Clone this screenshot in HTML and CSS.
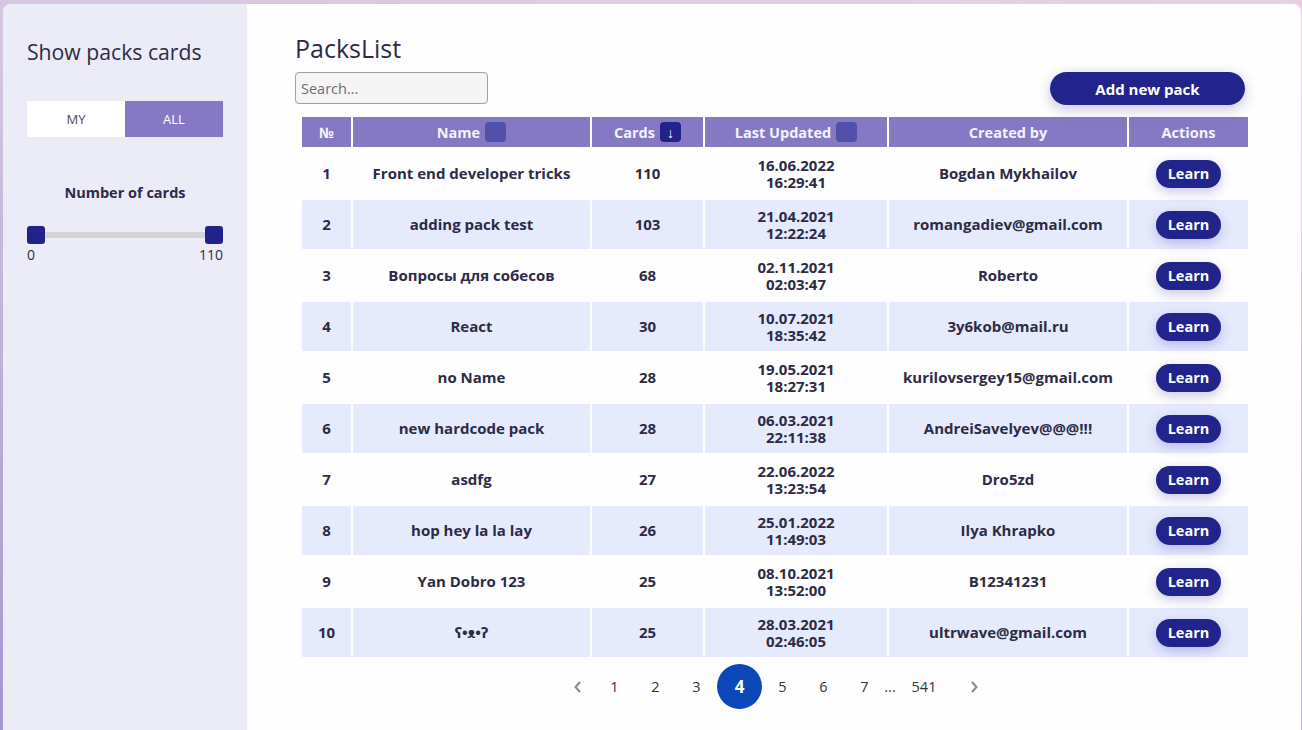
FILE: index.html
```html
<!DOCTYPE html>
<html lang="en">
<head>
<meta charset="utf-8">
<title>PacksList</title>
<link rel="stylesheet" href="styles.css">
</head>
<body>
<div class="app">
  <aside class="sidebar">
    <h2 class="side-title">Show packs cards</h2>
    <div class="toggle">
      <button class="toggle-btn">MY</button>
      <button class="toggle-btn active">ALL</button>
    </div>
    <div class="range">
      <div class="range-title">Number of cards</div>
      <div class="slider">
        <span class="thumb"></span>
        <span class="thumb"></span>
      </div>
      <div class="range-labels"><span>0</span><span>110</span></div>
    </div>
  </aside>
  <main class="main">
    <h1 class="title">PacksList</h1>
    <div class="toolbar">
      <input class="search" type="text" placeholder="Search...">
      <button class="add-btn">Add new pack</button>
    </div>
    <table class="packs">
      <colgroup>
        <col class="c-num"><col class="c-name"><col class="c-cards"><col class="c-date"><col class="c-user"><col class="c-act">
      </colgroup>
      <thead>
        <tr>
          <th>№</th>
          <th><span class="th-in">Name <span class="sort"></span></span></th>
          <th><span class="th-in">Cards <span class="sort on">↓</span></span></th>
          <th><span class="th-in">Last Updated <span class="sort"></span></span></th>
          <th>Created by</th>
          <th>Actions</th>
        </tr>
      </thead>
      <tbody>
        <tr><td>1</td><td>Front end developer tricks</td><td>110</td><td>16.06.2022<br>16:29:41</td><td>Bogdan Mykhailov</td><td><button class="learn">Learn</button></td></tr>
        <tr><td>2</td><td>adding pack test</td><td>103</td><td>21.04.2021<br>12:22:24</td><td>romangadiev@gmail.com</td><td><button class="learn">Learn</button></td></tr>
        <tr><td>3</td><td>Вопросы для собесов</td><td>68</td><td>02.11.2021<br>02:03:47</td><td>Roberto</td><td><button class="learn">Learn</button></td></tr>
        <tr><td>4</td><td>React</td><td>30</td><td>10.07.2021<br>18:35:42</td><td>3y6kob@mail.ru</td><td><button class="learn">Learn</button></td></tr>
        <tr><td>5</td><td>no Name</td><td>28</td><td>19.05.2021<br>18:27:31</td><td>kurilovsergey15@gmail.com</td><td><button class="learn">Learn</button></td></tr>
        <tr><td>6</td><td>new hardcode pack</td><td>28</td><td>06.03.2021<br>22:11:38</td><td>AndreiSavelyev@@@!!!</td><td><button class="learn">Learn</button></td></tr>
        <tr><td>7</td><td>asdfg</td><td>27</td><td>22.06.2022<br>13:23:54</td><td>Dro5zd</td><td><button class="learn">Learn</button></td></tr>
        <tr><td>8</td><td>hop hey la la lay</td><td>26</td><td>25.01.2022<br>11:49:03</td><td>Ilya Khrapko</td><td><button class="learn">Learn</button></td></tr>
        <tr><td>9</td><td>Yan Dobro 123</td><td>25</td><td>08.10.2021<br>13:52:00</td><td>B12341231</td><td><button class="learn">Learn</button></td></tr>
        <tr><td>10</td><td>ʕ•ᴥ•ʔ</td><td>25</td><td>28.03.2021<br>02:46:05</td><td>ultrwave@gmail.com</td><td><button class="learn">Learn</button></td></tr>
      </tbody>
    </table>
    <nav class="pager">
      <span class="pg arrow"><svg width="10" height="14" viewBox="0 0 10 14"><polyline points="7,2 2.5,7 7,12" fill="none" stroke="#8a8a8a" stroke-width="2"/></svg></span>
      <span class="pg">1</span>
      <span class="pg">2</span>
      <span class="pg">3</span>
      <span class="pg current">4</span>
      <span class="pg">5</span>
      <span class="pg">6</span>
      <span class="pg">7</span>
      <span class="pg dots">...</span>
      <span class="pg last">541</span>
      <span class="pg arrow next"><svg width="10" height="14" viewBox="0 0 10 14"><polyline points="3,2 7.5,7 3,12" fill="none" stroke="#8a8a8a" stroke-width="2"/></svg></span>
    </nav>
  </main>
</div>
</body>
</html>
```

FILE: styles.css
```css
* { box-sizing: border-box; }
html, body { height: 100%; }
body {
  margin: 0;
  padding: 4px 1px 0 3px;
  background: linear-gradient(200deg, #e6d2e0 0%, #d3c4e0 45%, #a597cf 100%);
  font-family: "Open Sans", "Noto Sans", sans-serif;
  color: #2d2b46;
  overflow: hidden;
}
.app {
  display: flex;
  height: calc(100vh - 4px);
  background: #fefefe;
  border-radius: 8px 8px 0 0;
  overflow: hidden;
}
.sidebar {
  width: 244px;
  flex: none;
  background: #ecebf8;
  padding: 34px 24px 0 24px;
}
.side-title {
  margin: 0;
  font-size: 21.2px;
  font-weight: 400;
  line-height: 28px;
  color: #2d2b46;
}
.toggle {
  display: flex;
  margin-top: 35px;
  height: 36px;
}
.toggle-btn {
  flex: 1;
  border: 0;
  margin: 0;
  padding: 0;
  font-family: inherit;
  font-size: 13px;
  color: #4a4960;
  background: #ffffff;
}
.toggle-btn.active {
  background: #8679c3;
  color: #ffffff;
}
.range { margin-top: 46px; }
.range-title {
  text-align: center;
  font-weight: 700;
  font-size: 14.5px;
  line-height: 20px;
  color: #2d2b46;
}
.slider {
  position: relative;
  margin-top: 23px;
  height: 18px;
  display: flex;
  justify-content: space-between;
  align-items: center;
}
.slider::before {
  content: "";
  position: absolute;
  left: 0; right: 0;
  top: 6px;
  height: 6px;
  background: #d4d4d6;
}
.thumb {
  position: relative;
  width: 18px;
  height: 18px;
  border-radius: 3px;
  background: #22238a;
}
.range-labels {
  display: flex;
  justify-content: space-between;
  font-size: 14px;
  line-height: 20px;
  color: #2d2b46;
  margin-top: 1px;
}
.main {
  flex: 1;
  padding: 28px 0 0 48px;
}
.title {
  margin: 0;
  font-size: 25px;
  font-weight: 400;
  line-height: 32px;
  color: #2d2b46;
}
.toolbar {
  width: 950px;
  display: flex;
  justify-content: space-between;
  align-items: flex-start;
  margin-top: 8px;
}
.search {
  width: 193px;
  height: 32px;
  border: 1px solid #a0a0a0;
  border-radius: 4px;
  background: #f5f5f5;
  padding: 0 5px;
  font-family: inherit;
  font-size: 14.5px;
  color: #333;
}
.search::placeholder { color: #6e6e78; }
.add-btn {
  width: 195px;
  height: 33px;
  border: 0;
  border-radius: 17px;
  background: #21248b;
  color: #ffffff;
  font-family: inherit;
  font-weight: 700;
  font-size: 15px;
  box-shadow: 0 4px 14px rgba(40, 40, 160, 0.28);
}
.packs {
  margin: 10px 0 0 5px;
  width: 950px;
  table-layout: fixed;
  border-collapse: separate;
  border-spacing: 2px;
}
.c-num { width: 49px; }
.c-name { width: 237px; }
.c-cards { width: 111px; }
.c-date { width: 182px; }
.c-user { width: 238px; }
.c-act { width: 119px; }
.packs th {
  height: 30px;
  padding: 0;
  background: #8679c3;
  color: #f3f2ff;
  font-size: 14.5px;
  font-weight: 700;
  text-align: center;
}
.th-in {
  display: inline-flex;
  align-items: center;
  gap: 5px;
}
.sort {
  display: inline-flex;
  align-items: center;
  justify-content: center;
  width: 21px;
  height: 20px;
  border-radius: 4px;
  background: #5151a9;
  color: #fff;
  font-size: 14px;
  font-weight: 400;
}
.sort.on { background: #22238a; }
.packs td {
  height: 49px;
  padding: 0;
  text-align: center;
  font-size: 15px;
  font-weight: 700;
  line-height: 17px;
  color: #2d2b46;
}
.packs tbody tr:nth-child(even) td { background: #e6eafd; }
.learn {
  width: 65px;
  height: 28px;
  border: 0;
  border-radius: 14px;
  background: #21248b;
  color: #fff;
  font-family: inherit;
  font-weight: 700;
  font-size: 14.5px;
  padding: 0;
  box-shadow: 0 4px 12px rgba(40, 40, 160, 0.25);
}
.pager {
  width: 950px;
  margin: 5px 0 0 6px;
  display: flex;
  justify-content: center;
  align-items: center;
  height: 45px;
  font-size: 14.5px;
  color: #333;
}
.pg {
  width: 41px;
  height: 45px;
  display: flex;
  align-items: center;
  justify-content: center;
}
.pg.arrow { width: 32px; }
.pg.next { margin-left: 5px; }
.pg.current {
  width: 45px;
  border-radius: 50%;
  background: #0b47b8;
  color: #fff;
  font-weight: 700;
  font-size: 17px;
}
.pg.dots { width: 10px; }
.pg.last { width: 58px; }
```
